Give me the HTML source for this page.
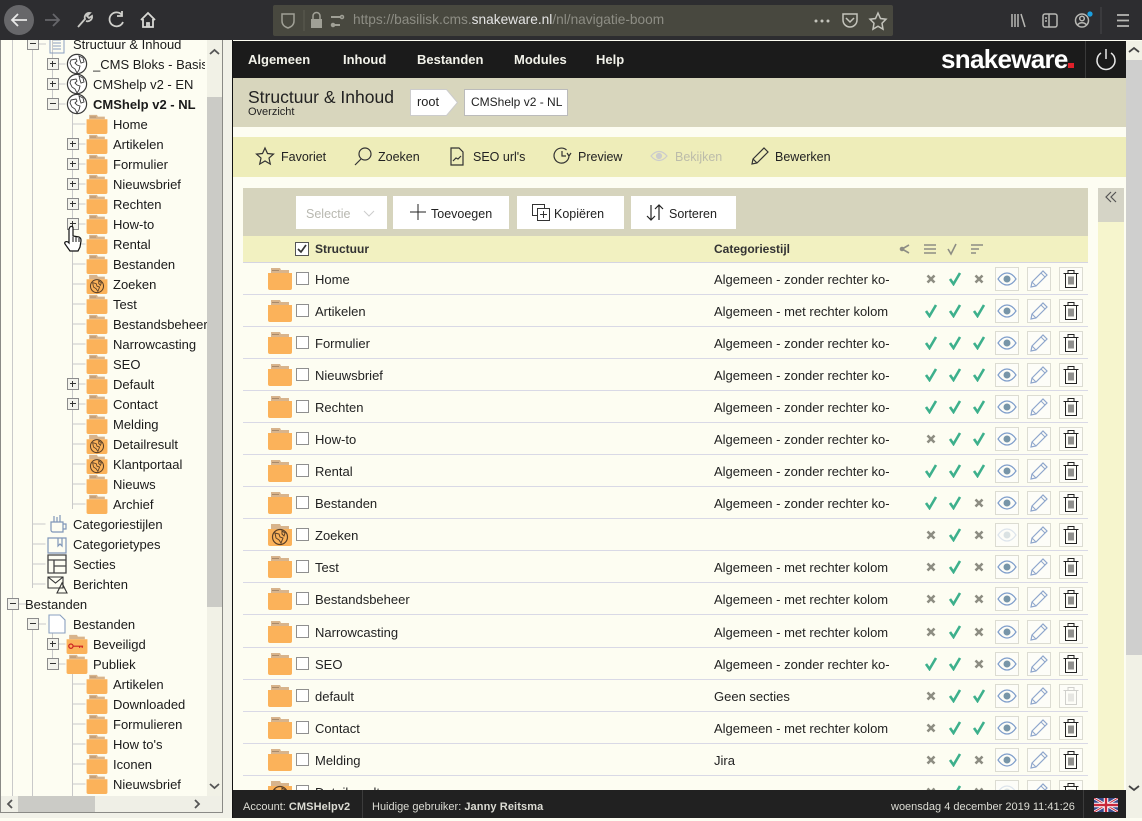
<!DOCTYPE html>
<html><head><meta charset="utf-8"><title>Structuur</title>
<style>
html,body{margin:0;padding:0;width:1142px;height:818px;overflow:hidden;background:#fdfdf2;font-family:"Liberation Sans",sans-serif;color:#1c1c1c}
div,span,svg,i,u,b{position:absolute;display:block}
u{text-decoration:none}
#top{left:0;top:0;width:1142px;height:40px;background:#2d2d30}
#url{left:273px;top:5px;width:620px;height:31px;background:#48483f;border-radius:2px}
#urlt{left:353px;top:12px;font-size:13.7px;color:#8d8d84;white-space:nowrap}
#urlt em{font-style:normal;color:#e4e4e4}
#tree{left:1px;top:40px;width:206px;height:756px;overflow:hidden;background:#fdfdf2}
#treein{left:-1px;top:-40px;width:207px;height:830px}
.tr{left:0;width:207px;height:20px;font-size:13px;line-height:20px;color:#1a1a1a}
.tr span{top:1px;white-space:nowrap}
.px,.mn{width:10px;height:10px;top:4px;border:1px solid #8c8c8c;background:#f3f3ec}
.px::before,.mn::before{content:"";position:absolute;left:2px;top:4px;width:6px;height:1px;background:#333}
.px::after{content:"";position:absolute;left:4px;top:2px;width:1px;height:6px;background:#333}
.fi{left:86px;top:0;width:22px;height:20px}
#vs{left:207px;top:40px;width:15px;height:756px;background:#f1f1e6}
#vt{left:207px;top:97px;width:15px;height:510px;background:#cbcbc6}
#hs{left:1px;top:796px;width:221px;height:16px;background:#efefe6}
#ht{left:18px;top:796px;width:77px;height:16px;background:#cbcbc6}
#mainbg{left:233px;top:41px;width:893px;height:777px;background:#fdfdf2}
#nav{left:233px;top:41px;width:893px;height:37px;background:#1b1b1b}
#nav span{top:10px;font-size:13px;font-weight:bold;color:#f2f2ea;line-height:17px}
#hdr{left:233px;top:78px;width:893px;height:49px;background:#d8d6bd}
#tb{left:233px;top:137px;width:893px;height:40px;background:#eeedb9}
#tb span{top:12px;font-size:12.5px;line-height:17px;color:#222;white-space:nowrap}
#tb svg{top:9px;width:20px;height:20px}
#panel{left:243px;top:188px;width:845px;height:48px;background:#d6d4bd}
.btn{top:196px;height:33px;background:#fff;font-size:12.5px;line-height:35px;color:#222}
.btn span{top:1px;white-space:nowrap}
#th{left:243px;top:236px;width:845px;height:26px;background:#f2f1c1;border-bottom:1px solid #d5d5e2}
#th span{top:5px;font-size:12px;font-weight:bold;line-height:16px;color:#333}
#side{left:1098px;top:188px;width:26px;height:602px;background:#f6f5cd}
#sidet{left:1098px;top:188px;width:26px;height:34px;background:#d5d4c6}
#rs{left:1126px;top:41px;width:16px;height:777px;background:#f1f1e6}
#rt{left:1126px;top:60px;width:16px;height:595px;background:#cfcfce}
.row{left:243px;width:845px;height:31px;border-bottom:1px solid #d9d9e6}
.row .fd{left:25px;top:4px;width:24px;height:23px}
.row .cb{left:53px;top:9px;width:11px;height:11px;border:1px solid #8f8f8f;background:#fff}
.row .nm{left:72px;top:8px;font-size:13px;line-height:17px;white-space:nowrap;color:#222}
.row .st{left:471px;top:8px;font-size:13px;line-height:17px;white-space:nowrap;color:#222}
.row .a,.row .b,.row .c{top:8px;width:14px;height:15px}
.row .a{left:681px}.row .b{left:705px}.row .c{left:729px}
.row u{top:4px;width:22px;height:22px;border:1px solid #dcdcd2;background:#fdfdf8}
.row u svg{left:1px;top:1px;width:20px;height:20px}
.row .b1{left:752px}.row .b2{left:784px}.row .b3{left:816px}
#foot{left:233px;top:790px;width:893px;height:28px;background:#212121;color:#dcdcd4;font-size:11px;line-height:28px}
#foot span{top:3px;white-space:nowrap}
#foot b{position:static;display:inline;letter-spacing:.1px}
</style></head><body>
<svg width="0" height="0" style="left:0;top:0">
<defs>
<symbol id="fo" viewBox="0 0 24 23"><path d="M3 1h9l1 2h8v3H3z" fill="#d8b48c"/><path d="M4 3h7v1H4z" fill="#a98a6a"/><path d="M0 6h24v15a2 2 0 0 1-2 2H2a2 2 0 0 1-2-2z" fill="#fbb25a"/></symbol>
<symbol id="fg" viewBox="0 0 24 23"><path d="M3 1h9l1 2h8v3H3z" fill="#d8b48c"/><path d="M0 6h24v15a2 2 0 0 1-2 2H2a2 2 0 0 1-2-2z" fill="#fbb25a"/><circle cx="12" cy="14" r="7.5" fill="none" stroke="#5a4028" stroke-width="1.200"/><path d="M7 10l4 1 1 3 3 1-2 5-2-3-3-2zM14 8l3 2-1 3-2-2z" fill="none" stroke="#5a4028" stroke-width="1"/></symbol>
<symbol id="gl" viewBox="0 0 22 22"><circle cx="11" cy="11" r="9.6" fill="#fff" stroke="#3a3a3a" stroke-width="1.200"/><path d="M5 7l5-1 1 2-2 2 2 2 3 1-1 4-2 3-2-4-3-2-2-4zM13 3l4 2 1 4-3 1-1-3z" fill="none" stroke="#3a3a3a" stroke-width=".9"/></symbol>
<symbol id="v" viewBox="0 0 14 15"><path d="M2 8l3.5 5L12 2" fill="none" stroke="#3db08c" stroke-width="2.6"/></symbol>
<symbol id="x" viewBox="0 0 14 15"><path d="M3.5 4.5l7 7M10.500 4.500l-7 7" fill="none" stroke="#8d8d82" stroke-width="2.600"/></symbol>
<symbol id="ey" viewBox="0 0 20 20"><path d="M1 10c3-4.500 6-6 9-6s6 1.500 9 6c-3 4.500-6 6-9 6s-6-1.500-9-6z" fill="none" stroke="#7f9ecb" stroke-width="1.200"/><circle cx="10" cy="10" r="3.500" fill="#7795a8"/></symbol>
<symbol id="pe" viewBox="0 0 20 20"><path d="M2 18l1-5L14 2l4 4L7 17z" fill="none" stroke="#8ea6cc" stroke-width="1.200"/><path d="M3 13l4 4M12 4l4 4" stroke="#8ea6cc" stroke-width="1"/></symbol>
<symbol id="tr" viewBox="0 0 20 20"><path d="M2.500 4.500h15M7 4.500v-3h6v3M4.500 4.500v14h11v-14M8 7.500v8M10 7.500v8M12 7.500v8" fill="none" stroke="#222" stroke-width="1"/></symbol>
<symbol id="kf" viewBox="0 0 24 23"><path d="M3 1h9l1 2h8v3H3z" fill="#d8b48c"/><path d="M0 6h24v15a2 2 0 0 1-2 2H2a2 2 0 0 1-2-2z" fill="#fbb25a"/><circle cx="5" cy="14" r="2.500" fill="none" stroke="#c22" stroke-width="1.400"/><path d="M8 14h11M15 14v2M18 14v2" stroke="#c22" stroke-width="1.400" fill="none"/></symbol>
</defs></svg>

<div id="top"></div>
<div style="left:4px;top:5px;width:30px;height:30px;border-radius:15px;background:#67676a"></div>
<svg style="left:0;top:0;width:170px;height:40px" viewBox="0 0 170 40" fill="none" stroke-width="1.800">
<path d="M27 20H12M18 14l-6 6 6 6" stroke="#e8e8e8"/>
<path d="M59 20H45M53 14l6 6-6 6" stroke="#66666a"/>
<path d="M78 27l7-8a4.500 4.500 0 0 1 5-6l-3 3 2 2 3-2a4.500 4.500 0 0 1-6 5" stroke="#c8c8c4"/>
<path d="M122 15a7 7 0 1 0 1 7M122 11v5h-5" stroke="#d0d0cc"/>
<path d="M141 20l7-7 7 7M143 19v8h10v-8M147 27v-4h2v4" stroke="#d8d8d4"/>
</svg>
<div id="url"></div>
<svg style="left:273px;top:5px;width:100px;height:31px" viewBox="0 0 100 31" fill="none" stroke="#a0a096" stroke-width="1.500">
<path d="M9 9h12v7c0 4-3 6-6 7-3-1-6-3-6-7z"/><path d="M31 5v21" stroke="#5c5c52" stroke-width="1"/>
<rect x="38" y="14" width="11" height="9" fill="#a0a096" stroke="none"/><path d="M40 14v-3a3.500 3.500 0 0 1 7 0v3"/>
<path d="M58 12h9M58 20h9" stroke-width="2"/><circle cx="69" cy="12" r="1.500"/><circle cx="60" cy="20" r="1.500"/>
</svg>
<div id="urlt">https://basilisk.cms.<em>snakeware.nl</em>/nl/navigatie-boom</div>
<svg style="left:810px;top:5px;width:85px;height:31px" viewBox="0 0 85 31" fill="none" stroke="#c4c4bc" stroke-width="1.500">
<circle cx="6" cy="16" r="1.500" fill="#c4c4bc" stroke="none"/><circle cx="12" cy="16" r="1.500" fill="#c4c4bc" stroke="none"/><circle cx="18" cy="16" r="1.500" fill="#c4c4bc" stroke="none"/>
<path d="M33 9h14v6a7 7 0 0 1-14 0z"/><path d="M36 13l4 4 4-4"/>
<path d="M68 8l2.500 5.500 5.500.7-4 4 1 6-5-3-5 3 1-6-4-4 5.500-.7z"/>
</svg>
<svg style="left:1005px;top:5px;width:137px;height:31px" viewBox="0 0 137 31" fill="none" stroke="#b8b8b4" stroke-width="1.500">
<path d="M7 9v13M10 9v13M13 9v13M16 9l4 13"/>
<rect x="38" y="9" width="14" height="13" rx="2"/><path d="M44 9v13M40 13h2M40 16h2"/>
<circle cx="77" cy="15.500" r="6.500"/><circle cx="77" cy="13.500" r="2.300"/><path d="M72.500 20c2-3 7-3 9 0"/>
<circle cx="85" cy="9" r="2.600" fill="#1a9fe0" stroke="none"/>
<path d="M96 2v27" stroke="#48484a" stroke-width="1"/>
<path d="M112 10h12M112 15.500h12M112 21h12" stroke-width="1.800"/>
</svg>

<div style="left:0;top:40px;width:1px;height:772px;background:#8a8a86"></div>
<div id="tree"><div id="treein">
<svg style="left:0;top:0;width:207px;height:830px" fill="none" stroke="#c9c9c9">
<path d="M12.500 40v756M32.500 40v548M32.500 630v170M52.500 40v65M52.500 630v40M72.500 104v405M72.500 670v130M32.500 524h13M32.500 544h13M32.500 564h13M32.500 584h13M52.500 64h13M52.500 84h13M52.500 104h13M72.500 124h13M72.500 144h13M72.500 164h13M72.500 184h13M72.500 204h13M72.500 224h13M72.500 244h13M72.500 264h13M72.500 284h13M72.500 304h13M72.500 324h13M72.500 344h13M72.500 364h13M72.500 384h13M72.500 404h13M72.500 424h13M72.500 444h13M72.500 464h13M72.500 484h13M72.500 504h13M72.500 684h13M72.500 704h13M72.500 724h13M72.500 744h13M72.500 764h13M72.500 784h13M52.500 644h13M52.500 664h13M18 604h8M38 624h8M38 44h8"/></svg>
<div class="tr" style="top:34px"><b class="mn" style="left:27px"></b><svg style="left:48px;top:0;width:18px;height:20px" viewBox="0 0 18 20" fill="none" stroke="#8aa0c0"><rect x="2" y="1" width="14" height="18"/><path d="M5 6h8M5 9h8M5 12h8M5 15h8"/></svg><span style="left:73px">Structuur &amp; Inhoud</span></div>
<div class="tr" style="top:54px"><b class="px" style="left:47px"></b><svg style="left:66px;top:-1px;width:22px;height:22px"><use href="#gl"/></svg><span style="left:93px;width:112px;overflow:hidden">_CMS Bloks - Basis</span></div>
<div class="tr" style="top:74px"><b class="px" style="left:47px"></b><svg style="left:66px;top:-1px;width:22px;height:22px"><use href="#gl"/></svg><span style="left:93px">CMShelp v2 - EN</span></div>
<div class="tr" style="top:94px"><b class="mn" style="left:47px"></b><svg style="left:66px;top:-1px;width:22px;height:22px"><use href="#gl"/></svg><span style="left:93px;font-weight:bold">CMShelp v2 - NL</span></div>
<div class="tr" style="top:114px"><svg class="fi"><use href="#fo"/></svg><span style="left:113px">Home</span></div>
<div class="tr" style="top:134px"><b class="px" style="left:67px"></b><svg class="fi"><use href="#fo"/></svg><span style="left:113px">Artikelen</span></div>
<div class="tr" style="top:154px"><b class="px" style="left:67px"></b><svg class="fi"><use href="#fo"/></svg><span style="left:113px">Formulier</span></div>
<div class="tr" style="top:174px"><b class="px" style="left:67px"></b><svg class="fi"><use href="#fo"/></svg><span style="left:113px">Nieuwsbrief</span></div>
<div class="tr" style="top:194px"><b class="px" style="left:67px"></b><svg class="fi"><use href="#fo"/></svg><span style="left:113px">Rechten</span></div>
<div class="tr" style="top:214px"><b class="px" style="left:67px"></b><svg class="fi"><use href="#fo"/></svg><span style="left:113px">How-to</span></div>
<div class="tr" style="top:234px"><svg class="fi"><use href="#fo"/></svg><span style="left:113px">Rental</span></div>
<div class="tr" style="top:254px"><svg class="fi"><use href="#fo"/></svg><span style="left:113px">Bestanden</span></div>
<div class="tr" style="top:274px"><svg class="fi"><use href="#fg"/></svg><span style="left:113px">Zoeken</span></div>
<div class="tr" style="top:294px"><svg class="fi"><use href="#fo"/></svg><span style="left:113px">Test</span></div>
<div class="tr" style="top:314px"><svg class="fi"><use href="#fo"/></svg><span style="left:113px">Bestandsbeheer</span></div>
<div class="tr" style="top:334px"><svg class="fi"><use href="#fo"/></svg><span style="left:113px">Narrowcasting</span></div>
<div class="tr" style="top:354px"><svg class="fi"><use href="#fo"/></svg><span style="left:113px">SEO</span></div>
<div class="tr" style="top:374px"><b class="px" style="left:67px"></b><svg class="fi"><use href="#fo"/></svg><span style="left:113px">Default</span></div>
<div class="tr" style="top:394px"><b class="px" style="left:67px"></b><svg class="fi"><use href="#fo"/></svg><span style="left:113px">Contact</span></div>
<div class="tr" style="top:414px"><svg class="fi"><use href="#fo"/></svg><span style="left:113px">Melding</span></div>
<div class="tr" style="top:434px"><svg class="fi"><use href="#fg"/></svg><span style="left:113px">Detailresult</span></div>
<div class="tr" style="top:454px"><svg class="fi"><use href="#fg"/></svg><span style="left:113px">Klantportaal</span></div>
<div class="tr" style="top:474px"><svg class="fi"><use href="#fo"/></svg><span style="left:113px">Nieuws</span></div>
<div class="tr" style="top:494px"><svg class="fi"><use href="#fo"/></svg><span style="left:113px">Archief</span></div>
<div class="tr" style="top:514px"><svg style="left:48px;top:0;width:20px;height:20px" viewBox="0 0 20 20" fill="none" stroke="#7f96b8"><path d="M3 8h12v10H5a2 2 0 0 1-2-2zM15 10h3v5h-3M6 8V2M9 8V3M12 8V1" stroke-width="1.200"/></svg><span style="left:73px">Categoriestijlen</span></div>
<div class="tr" style="top:534px"><svg style="left:47px;top:0;width:20px;height:20px" viewBox="0 0 20 20" fill="none" stroke="#7f96b8"><path d="M1 4h18v15H1zM11 4v8l2-2 2 2V4" stroke-width="1.200"/></svg><span style="left:73px">Categorietypes</span></div>
<div class="tr" style="top:554px"><svg style="left:47px;top:0;width:20px;height:20px" viewBox="0 0 20 20" fill="none" stroke="#444"><path d="M1 1h18v18H1zM1 6h18M7 6v13M7 12h12" stroke-width="1.300"/></svg><span style="left:73px">Secties</span></div>
<div class="tr" style="top:574px"><svg style="left:47px;top:0;width:21px;height:20px" viewBox="0 0 21 20" fill="none" stroke="#333"><path d="M1 3h15v11H1zM1 3l7.500 6L16 3M15 9l-5 10h10z" stroke-width="1.100"/></svg><span style="left:73px">Berichten</span></div>
<div class="tr" style="top:594px"><b class="mn" style="left:7px"></b><span style="left:25px">Bestanden</span></div>
<div class="tr" style="top:614px"><b class="mn" style="left:27px"></b><svg style="left:47px;top:0;width:20px;height:20px" viewBox="0 0 20 20" fill="#fff" stroke="#8aa0c0"><path d="M2 1h11l5 5v13H2z" stroke-width="1.100"/></svg><span style="left:73px">Bestanden</span></div>
<div class="tr" style="top:634px"><b class="px" style="left:47px"></b><svg class="fi" style="left:66px"><use href="#kf"/></svg><span style="left:93px">Beveiligd</span></div>
<div class="tr" style="top:654px"><b class="mn" style="left:47px"></b><svg class="fi" style="left:66px"><use href="#fo"/></svg><span style="left:93px">Publiek</span></div>
<div class="tr" style="top:674px"><svg class="fi"><use href="#fo"/></svg><span style="left:113px">Artikelen</span></div>
<div class="tr" style="top:694px"><svg class="fi"><use href="#fo"/></svg><span style="left:113px">Downloaded</span></div>
<div class="tr" style="top:714px"><svg class="fi"><use href="#fo"/></svg><span style="left:113px">Formulieren</span></div>
<div class="tr" style="top:734px"><svg class="fi"><use href="#fo"/></svg><span style="left:113px">How to's</span></div>
<div class="tr" style="top:754px"><svg class="fi"><use href="#fo"/></svg><span style="left:113px">Iconen</span></div>
<div class="tr" style="top:774px"><svg class="fi"><use href="#fo"/></svg><span style="left:113px">Nieuwsbrief</span></div>
</div></div>
<svg style="left:63px;top:225px;width:20px;height:27px" viewBox="0 0 20 27"><path d="M7 2c1-1 3-1 3 1v8l6 1c2 1 2 2 2 4l-1 6-2 4H7l-5-7c-1-2 1-3 3-2l1 1V4z" fill="#fff" stroke="#111" stroke-width="1.200"/><path d="M10 12v5M13 12v5M16 13v4" stroke="#111"/></svg>
<div id="vs"></div><div id="vt"></div>
<svg style="left:207px;top:43px;width:15px;height:753px" viewBox="0 0 15 753" fill="none" stroke="#555" stroke-width="1.800"><path d="M3 11l4.500-4 4.500 4M3 741l4.500 4 4.500-4"/></svg>
<div id="hs"></div><div id="ht"></div>
<svg style="left:1px;top:796px;width:221px;height:16px" viewBox="0 0 221 16" fill="none" stroke="#555" stroke-width="1.800"><path d="M11 4L7 8l4 4M194 4l4 4-4 4"/></svg>
<div style="left:0;top:812px;width:223px;height:1px;background:#8a8a86"></div>
<div style="left:222px;top:40px;width:1px;height:773px;background:#8a8a86"></div>
<div style="left:223px;top:40px;width:9px;height:778px;background:#f1f1e8"></div>
<div style="left:0;top:813px;width:232px;height:5px;background:#f1f1e8"></div>
<div style="left:232px;top:40px;width:1px;height:778px;background:#111"></div>

<div id="mainbg"></div>
<div id="hdr"></div>
<div style="left:248px;top:87px;font-size:17.5px;line-height:21px;color:#222;white-space:nowrap">Structuur &amp; Inhoud</div>
<div style="left:248px;top:106px;font-size:11px;line-height:13px;color:#222">Overzicht</div>
<svg style="left:410px;top:89px;width:160px;height:28px" viewBox="0 0 160 28"><path d="M.5.500h36l11 13-11 13H.5z" fill="#fff" stroke="#ccc"/><path d="M54.500.500h103v26h-103z" fill="#fff" stroke="#bbb"/></svg>
<div style="left:417px;top:94px;font-size:12.800px;line-height:16px;color:#222">root</div>
<div style="left:471px;top:94px;font-size:12px;line-height:16px;color:#222;white-space:nowrap">CMShelp v2 - NL</div>
<div id="nav">
<span style="left:15px">Algemeen</span><span style="left:110px">Inhoud</span><span style="left:184px">Bestanden</span><span style="left:281px">Modules</span><span style="left:363px">Help</span>
<span style="left:708px;top:4px;font-size:26px;line-height:29px;letter-spacing:-.7px;color:#fff;white-space:nowrap">snakeware</span>
<div style="left:835px;top:22px;width:6px;height:5px;background:#e0202a"></div>
<div style="left:852px;top:0;width:1px;height:37px;background:#3a3a3a"></div>
<svg style="left:862px;top:6px;width:22px;height:24px" viewBox="0 0 22 24" fill="none" stroke="#e8e8e8" stroke-width="1.500"><path d="M6 6a9 9 0 1 0 10 0M11 2v10"/></svg>
</div>
<div id="tb">
<svg style="left:22px" viewBox="0 0 20 20" fill="none" stroke="#333" stroke-width="1.200"><path d="M10 2l2.500 5.500 6 .6-4.500 4 1.300 6L10 15l-5.300 3.100 1.300-6-4.500-4 6-.6z"/></svg><span style="left:48px">Favoriet</span>
<svg style="left:120px" viewBox="0 0 20 20" fill="none" stroke="#333" stroke-width="1.200"><circle cx="12" cy="8" r="6"/><path d="M8 13l-6 6"/></svg><span style="left:145px">Zoeken</span>
<svg style="left:214px" viewBox="0 0 20 20" fill="none" stroke="#333" stroke-width="1.200"><path d="M4 2h8l4 4v13H4zM6 15l3-3 2 1 3-3"/></svg><span style="left:240px">SEO url's</span>
<svg style="left:319px" viewBox="0 0 20 20" fill="none" stroke="#333" stroke-width="1.200"><path d="M17 10a7.500 7.500 0 1 1-2.500-6M10 5v5h4M15 7l2 3 2-3"/></svg><span style="left:345px">Preview</span>
<svg style="left:416px" viewBox="0 0 20 20" fill="none" stroke="#ccc" stroke-width="1.200"><path d="M2 10c5-6 11-6 16 0-5 6-11 6-16 0z"/><circle cx="10" cy="10" r="2.500" fill="#ccc"/></svg><span style="left:442px;color:#bcbcaa">Bekijken</span>
<svg style="left:517px" viewBox="0 0 20 20" fill="none" stroke="#333" stroke-width="1.200"><path d="M2 18l1-5L14 2l4 4L7 17z"/><path d="M3 13l4 4"/></svg><span style="left:542px">Bewerken</span>
</div>
<div id="panel"></div>
<div class="btn" style="left:296px;width:91px;color:#b8b8b0"><span style="left:10px">Selectie</span><svg style="left:67px;top:14px;width:12px;height:8px" viewBox="0 0 12 8" fill="none" stroke="#ccc"><path d="M1 1l5 5 5-5"/></svg></div>
<div class="btn" style="left:393px;width:116px"><svg style="left:17px;top:8px;width:16px;height:16px" viewBox="0 0 16 16" stroke="#222"><path d="M8 0v16M0 8h16"/></svg><span style="left:38px">Toevoegen</span></div>
<div class="btn" style="left:517px;width:107px"><svg style="left:15px;top:8px;width:18px;height:17px" viewBox="0 0 18 17" fill="#fff" stroke="#333"><path d="M.5.500h12v11H.5z"/><path d="M5.500 4.500h12v12H5.500zM11.500 7v7M8 10.500h7"/></svg><span style="left:37px">Kopiëren</span></div>
<div class="btn" style="left:631px;width:105px"><svg style="left:15px;top:8px;width:18px;height:17px" viewBox="0 0 18 17" fill="none" stroke="#222" stroke-width="1.200"><path d="M5 1v15M1 12l4 4 4-4M13 16V1M9 5l4-4 4 4"/></svg><span style="left:38px">Sorteren</span></div>
<div id="th">
<div style="left:52px;top:6px;width:12px;height:12px;border:1px solid #555;background:#fff"></div>
<svg style="left:54px;top:8px;width:10px;height:10px" viewBox="0 0 10 10" fill="none" stroke="#333" stroke-width="1.700"><path d="M1 5l3 3 5-7"/></svg>
<span style="left:72px">Structuur</span><span style="left:471px">Categoriestijl</span>
<svg style="left:656px;top:6px;width:90px;height:14px" viewBox="0 0 90 14" fill="none" stroke="#8d8d84" stroke-width="1.600"><path d="M10 3L3 7l7 4"/><circle cx="3" cy="7" r="1.500" fill="#8d8d84"/><path d="M25 3h12M25 7h12M25 11h12M49 7l3 5 5-10M72 3h12M72 7h8M72 11h5"/></svg>
</div>
<div id="side"></div><div id="sidet"></div>
<svg style="left:1105px;top:190px;width:14px;height:14px" viewBox="0 0 14 14" fill="none" stroke="#555" stroke-width="1.200"><path d="M6 2L1 7l5 5M11 2L6 7l5 5"/></svg>

<div class="row" style="top:263px"><svg class="fd"><use href="#fo"/></svg><i class="cb"></i><span class="nm">Home</span><span class="st">Algemeen - zonder rechter ko-</span><svg class="a"><use href="#x"/></svg><svg class="b"><use href="#v"/></svg><svg class="c"><use href="#x"/></svg><u class="b1"><svg><use href="#ey"/></svg></u><u class="b2"><svg><use href="#pe"/></svg></u><u class="b3"><svg><use href="#tr"/></svg></u></div>
<div class="row" style="top:295px"><svg class="fd"><use href="#fo"/></svg><i class="cb"></i><span class="nm">Artikelen</span><span class="st">Algemeen - met rechter kolom</span><svg class="a"><use href="#v"/></svg><svg class="b"><use href="#v"/></svg><svg class="c"><use href="#v"/></svg><u class="b1"><svg><use href="#ey"/></svg></u><u class="b2"><svg><use href="#pe"/></svg></u><u class="b3"><svg><use href="#tr"/></svg></u></div>
<div class="row" style="top:327px"><svg class="fd"><use href="#fo"/></svg><i class="cb"></i><span class="nm">Formulier</span><span class="st">Algemeen - zonder rechter ko-</span><svg class="a"><use href="#v"/></svg><svg class="b"><use href="#v"/></svg><svg class="c"><use href="#v"/></svg><u class="b1"><svg><use href="#ey"/></svg></u><u class="b2"><svg><use href="#pe"/></svg></u><u class="b3"><svg><use href="#tr"/></svg></u></div>
<div class="row" style="top:359px"><svg class="fd"><use href="#fo"/></svg><i class="cb"></i><span class="nm">Nieuwsbrief</span><span class="st">Algemeen - zonder rechter ko-</span><svg class="a"><use href="#v"/></svg><svg class="b"><use href="#v"/></svg><svg class="c"><use href="#v"/></svg><u class="b1"><svg><use href="#ey"/></svg></u><u class="b2"><svg><use href="#pe"/></svg></u><u class="b3"><svg><use href="#tr"/></svg></u></div>
<div class="row" style="top:391px"><svg class="fd"><use href="#fo"/></svg><i class="cb"></i><span class="nm">Rechten</span><span class="st">Algemeen - zonder rechter ko-</span><svg class="a"><use href="#v"/></svg><svg class="b"><use href="#v"/></svg><svg class="c"><use href="#v"/></svg><u class="b1"><svg><use href="#ey"/></svg></u><u class="b2"><svg><use href="#pe"/></svg></u><u class="b3"><svg><use href="#tr"/></svg></u></div>
<div class="row" style="top:423px"><svg class="fd"><use href="#fo"/></svg><i class="cb"></i><span class="nm">How-to</span><span class="st">Algemeen - zonder rechter ko-</span><svg class="a"><use href="#x"/></svg><svg class="b"><use href="#v"/></svg><svg class="c"><use href="#v"/></svg><u class="b1"><svg><use href="#ey"/></svg></u><u class="b2"><svg><use href="#pe"/></svg></u><u class="b3"><svg><use href="#tr"/></svg></u></div>
<div class="row" style="top:455px"><svg class="fd"><use href="#fo"/></svg><i class="cb"></i><span class="nm">Rental</span><span class="st">Algemeen - zonder rechter ko-</span><svg class="a"><use href="#v"/></svg><svg class="b"><use href="#v"/></svg><svg class="c"><use href="#v"/></svg><u class="b1"><svg><use href="#ey"/></svg></u><u class="b2"><svg><use href="#pe"/></svg></u><u class="b3"><svg><use href="#tr"/></svg></u></div>
<div class="row" style="top:487px"><svg class="fd"><use href="#fo"/></svg><i class="cb"></i><span class="nm">Bestanden</span><span class="st">Algemeen - zonder rechter ko-</span><svg class="a"><use href="#v"/></svg><svg class="b"><use href="#v"/></svg><svg class="c"><use href="#x"/></svg><u class="b1"><svg><use href="#ey"/></svg></u><u class="b2"><svg><use href="#pe"/></svg></u><u class="b3"><svg><use href="#tr"/></svg></u></div>
<div class="row" style="top:519px"><svg class="fd"><use href="#fg"/></svg><i class="cb"></i><span class="nm">Zoeken</span><svg class="a"><use href="#x"/></svg><svg class="b"><use href="#v"/></svg><svg class="c"><use href="#x"/></svg><u class="b1"><svg style="opacity:.25"><use href="#ey"/></svg></u><u class="b2"><svg><use href="#pe"/></svg></u><u class="b3"><svg><use href="#tr"/></svg></u></div>
<div class="row" style="top:551px"><svg class="fd"><use href="#fo"/></svg><i class="cb"></i><span class="nm">Test</span><span class="st">Algemeen - met rechter kolom</span><svg class="a"><use href="#x"/></svg><svg class="b"><use href="#v"/></svg><svg class="c"><use href="#x"/></svg><u class="b1"><svg><use href="#ey"/></svg></u><u class="b2"><svg><use href="#pe"/></svg></u><u class="b3"><svg><use href="#tr"/></svg></u></div>
<div class="row" style="top:583px"><svg class="fd"><use href="#fo"/></svg><i class="cb"></i><span class="nm">Bestandsbeheer</span><span class="st">Algemeen - met rechter kolom</span><svg class="a"><use href="#x"/></svg><svg class="b"><use href="#v"/></svg><svg class="c"><use href="#x"/></svg><u class="b1"><svg><use href="#ey"/></svg></u><u class="b2"><svg><use href="#pe"/></svg></u><u class="b3"><svg><use href="#tr"/></svg></u></div>
<div class="row" style="top:616px"><svg class="fd"><use href="#fo"/></svg><i class="cb"></i><span class="nm">Narrowcasting</span><span class="st">Algemeen - met rechter kolom</span><svg class="a"><use href="#x"/></svg><svg class="b"><use href="#v"/></svg><svg class="c"><use href="#x"/></svg><u class="b1"><svg><use href="#ey"/></svg></u><u class="b2"><svg><use href="#pe"/></svg></u><u class="b3"><svg><use href="#tr"/></svg></u></div>
<div class="row" style="top:648px"><svg class="fd"><use href="#fo"/></svg><i class="cb"></i><span class="nm">SEO</span><span class="st">Algemeen - zonder rechter ko-</span><svg class="a"><use href="#v"/></svg><svg class="b"><use href="#v"/></svg><svg class="c"><use href="#x"/></svg><u class="b1"><svg><use href="#ey"/></svg></u><u class="b2"><svg><use href="#pe"/></svg></u><u class="b3"><svg><use href="#tr"/></svg></u></div>
<div class="row" style="top:680px"><svg class="fd"><use href="#fo"/></svg><i class="cb"></i><span class="nm">default</span><span class="st">Geen secties</span><svg class="a"><use href="#x"/></svg><svg class="b"><use href="#v"/></svg><svg class="c"><use href="#v"/></svg><u class="b1"><svg><use href="#ey"/></svg></u><u class="b2"><svg><use href="#pe"/></svg></u><u class="b3"><svg style="opacity:.2"><use href="#tr"/></svg></u></div>
<div class="row" style="top:712px"><svg class="fd"><use href="#fo"/></svg><i class="cb"></i><span class="nm">Contact</span><span class="st">Algemeen - met rechter kolom</span><svg class="a"><use href="#x"/></svg><svg class="b"><use href="#v"/></svg><svg class="c"><use href="#v"/></svg><u class="b1"><svg><use href="#ey"/></svg></u><u class="b2"><svg><use href="#pe"/></svg></u><u class="b3"><svg><use href="#tr"/></svg></u></div>
<div class="row" style="top:744px"><svg class="fd"><use href="#fo"/></svg><i class="cb"></i><span class="nm">Melding</span><span class="st">Jira</span><svg class="a"><use href="#x"/></svg><svg class="b"><use href="#v"/></svg><svg class="c"><use href="#x"/></svg><u class="b1"><svg><use href="#ey"/></svg></u><u class="b2"><svg><use href="#pe"/></svg></u><u class="b3"><svg><use href="#tr"/></svg></u></div>
<div class="row" style="top:776px"><svg class="fd"><use href="#fg"/></svg><i class="cb"></i><span class="nm">Detailresult</span><svg class="a"><use href="#x"/></svg><svg class="b"><use href="#v"/></svg><svg class="c"><use href="#x"/></svg><u class="b1"><svg style="opacity:.25"><use href="#ey"/></svg></u><u class="b2"><svg><use href="#pe"/></svg></u><u class="b3"><svg><use href="#tr"/></svg></u></div>

<div id="foot">
<span style="left:10px">Account: <b>CMSHelpv2</b></span>
<div style="left:129px;top:0;width:1px;height:28px;background:#3c3c3c"></div>
<span style="left:139px">Huidige gebruiker: <b>Janny Reitsma</b></span>
<span style="left:658px">woensdag 4 december 2019 11:41:26</span>
<div style="left:850px;top:0;width:1px;height:28px;background:#3c3c3c"></div>
<svg style="left:861px;top:8px;width:24px;height:14px" viewBox="0 0 24 14"><rect width="24" height="14" fill="#3a4a8c"/><path d="M0 0l24 14M24 0L0 14" stroke="#fff" stroke-width="2.600"/><path d="M0 0l24 14M24 0L0 14" stroke="#c8283c" stroke-width="1"/><path d="M12 0v14M0 7h24" stroke="#fff" stroke-width="4.500"/><path d="M12 0v14M0 7h24" stroke="#c8283c" stroke-width="2.400"/></svg>
</div>
<div id="rs"></div><div id="rt"></div>
<svg style="left:1126px;top:41px;width:16px;height:777px" viewBox="0 0 16 777" fill="none" stroke="#444" stroke-width="1.800"><path d="M3 11l5-4 5 4M3 745l5 4 5-4"/></svg>
</body></html>
